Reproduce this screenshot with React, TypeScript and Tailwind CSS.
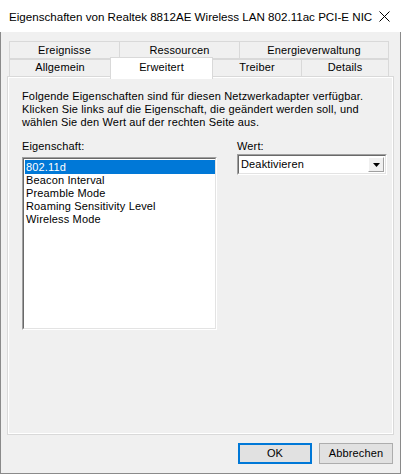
import React from "react";

const tabsBack = [
  { label: "Ereignisse", w: "w-[111px]" },
  { label: "Ressourcen", w: "w-[121px]" },
  { label: "Energieverwaltung", w: "w-[150px]" },
];

const props = [
  "802.11d",
  "Beacon Interval",
  "Preamble Mode",
  "Roaming Sensitivity Level",
  "Wireless Mode",
];

export default function App() {
  return (
    <div className="w-[401px] h-[474px] flex flex-col bg-white text-black font-['Liberation_Sans',Arial,sans-serif] text-[11px] leading-[13px] tracking-[0.15px]">
      {/* title bar */}
      <div className="h-[32px] shrink-0 flex items-center bg-white pl-[9px] pr-[11px]">
        <span className="flex-1 min-w-0 whitespace-nowrap overflow-hidden text-[11.6px] tracking-normal">
          Eigenschaften von Realtek 8812AE Wireless LAN 802.11ac PCI-E NIC
        </span>
        <svg width="11" height="11" viewBox="0 0 11 11" className="mt-px shrink-0">
          <path d="M0.5 0.5 L10.5 10.5 M10.5 0.5 L0.5 10.5" stroke="#000" strokeWidth="1" />
        </svg>
      </div>

      {/* body */}
      <div className="flex-1 flex flex-col bg-[#f0f0f0] border-x border-b border-[#8a8a8a] px-[6px]">
        {/* tabs */}
        <div className="mt-[9px] ml-[2px] flex flex-col">
          <div className="flex h-[19px]">
            {tabsBack.map((t, i) => (
              <div
                key={t.label}
                className={`${t.w} ${i > 0 ? "-ml-px" : ""} h-[19px] border border-[#d9d9d9] flex items-center justify-center`}
              >
                {t.label}
              </div>
            ))}
          </div>
          <div className="flex h-[18px] -mt-px items-end">
            <div className="w-[102px] h-[19px] border border-[#d9d9d9] flex items-center justify-center">
              Allgemein
            </div>
            <div className="relative z-10 -ml-px w-[103px] h-[22px] -mb-[2px] border border-b-0 border-[#d9d9d9] bg-white flex items-start justify-center pt-[3px]">
              Erweitert
            </div>
            <div className="-ml-px w-[90px] h-[19px] border border-[#d9d9d9] flex items-center justify-center">
              Treiber
            </div>
            <div className="-ml-px w-[88px] h-[19px] border border-[#d9d9d9] flex items-center justify-center">
              Details
            </div>
          </div>
        </div>

        {/* panel */}
        <div className="h-[359px] -mt-px border border-[#d9d9d9]">
          <div className="h-full border border-white pl-[13px] pt-[12px]">
            <p>
              Folgende Eigenschaften sind für diesen Netzwerkadapter verfügbar.
              <br />
              Klicken Sie links auf die Eigenschaft, die geändert werden soll, und
              <br />
              wählen Sie den Wert auf der rechten Seite aus.
            </p>

            <div className="flex mt-[11px]">
              <div className="flex flex-col">
                <div>Eigenschaft:</div>
                <div className="mt-[4px] w-[195px] h-[173px] bg-white border-t border-l border-[#a0a0a0] border-r border-b border-r-white border-b-white">
                  <div className="h-full border-t border-l border-[#696969] border-r border-b border-r-[#e3e3e3] border-b-[#e3e3e3] pl-px pt-px">
                    {props.map((p, i) => (
                      <div
                        key={p}
                        className={`h-[13px] pl-px leading-[13px] ${i === 0 ? "bg-[#0078d7] text-white h-[14px] leading-[14px]" : ""}`}
                      >
                        {p}
                      </div>
                    ))}
                  </div>
                </div>
              </div>

              <div className="ml-[20px] flex flex-col">
                <div>Wert:</div>
                <div className="mt-[1px] w-[150px] h-[21px] bg-white border-t border-l border-[#a0a0a0] border-r border-b border-r-white border-b-white">
                  <div className="h-full flex items-center border-t border-l border-[#696969] border-r border-b border-r-[#e3e3e3] border-b-[#e3e3e3]">
                    <span className="flex-1 pl-[2px]">Deaktivieren</span>
                    <div className="w-[16px] h-[15px] mr-px bg-[#f0f0f0] border-t border-l border-white border-r border-b border-r-[#a0a0a0] border-b-[#a0a0a0] flex items-center justify-center">
                      <svg width="7" height="4" viewBox="0 0 7 4">
                        <path d="M0 0 H7 L3.5 4 Z" fill="#000" />
                      </svg>
                    </div>
                  </div>
                </div>
              </div>
            </div>
          </div>
        </div>

        {/* buttons */}
        <div className="flex justify-end gap-[7px] mt-[8px] pr-px">
          <button className="w-[74px] h-[21px] bg-[#e1e1e1] border-2 border-[#0078d7] text-[11px] leading-none">
            OK
          </button>
          <button className="w-[74px] h-[21px] bg-[#e1e1e1] border border-[#adadad] text-[11px] leading-none">
            Abbrechen
          </button>
        </div>
      </div>
    </div>
  );
}
